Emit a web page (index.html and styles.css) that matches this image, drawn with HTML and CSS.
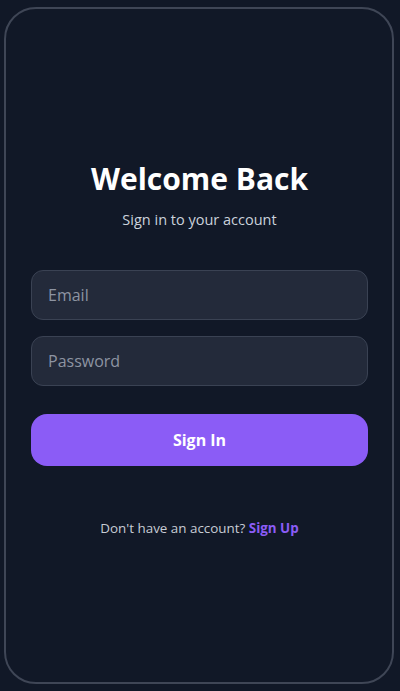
FILE: index.html
```html
<!DOCTYPE html>
<html lang="en">
<head>
<meta charset="utf-8">
<title>Sign In</title>
<link rel="stylesheet" href="styles.css">
</head>
<body>
<div class="frame">
  <main class="content">
    <h1 class="title">Welcome Back</h1>
    <p class="subtitle">Sign in to your account</p>
    <form class="form">
      <input class="field" type="email" placeholder="Email">
      <input class="field" type="password" placeholder="Password">
      <button class="submit" type="button">Sign In</button>
    </form>
    <p class="footer">Don't have an account? <a class="link" href="#">Sign Up</a></p>
  </main>
</div>
</body>
</html>
```
FILE: styles.css
```css
* { box-sizing: border-box; }
html, body { height: 100%; }
body {
  margin: 0;
  background: #111827;
  font-family: "Open Sans", "Noto Sans", sans-serif;
  padding: 7px 7px 8px 4px;
}
.frame {
  width: 390px;
  height: 677px;
  border: 2px solid #3f4656;
  border-radius: 32px;
  background: #111827;
  display: flex;
  flex-direction: column;
  justify-content: center;
  padding: 5px 24px 0 25px;
}
.content {
  display: flex;
  flex-direction: column;
  align-items: stretch;
  text-align: center;
}
.title {
  margin: 0;
  font-size: 30px;
  font-weight: 700;
  color: #ffffff;
  line-height: 40px;
}
.subtitle {
  margin: 10px 0 0;
  font-size: 14.5px;
  color: #cbd2dc;
  line-height: 22px;
}
.form {
  display: flex;
  flex-direction: column;
  gap: 16px;
  margin-top: 39px;
}
.field {
  height: 50px;
  width: 100%;
  border: 1px solid #3a4253;
  border-radius: 12px;
  background: #232a3a;
  padding: 0 16px;
  font-family: inherit;
  font-size: 16px;
  color: #fff;
  outline: none;
}
.field::placeholder { color: #8d94a2; }
.submit {
  margin-top: 12px;
  height: 52px;
  border: none;
  border-radius: 16px;
  background: #8b5cf6;
  color: #fff;
  font-family: inherit;
  font-size: 16px;
  font-weight: 700;
}
.footer {
  margin: 52px 0 0;
  font-size: 13.4px;
  color: #c7ccd5;
  line-height: 20px;
}
.link {
  color: #8b5cf6;
  font-weight: 700;
  text-decoration: none;
}
```
